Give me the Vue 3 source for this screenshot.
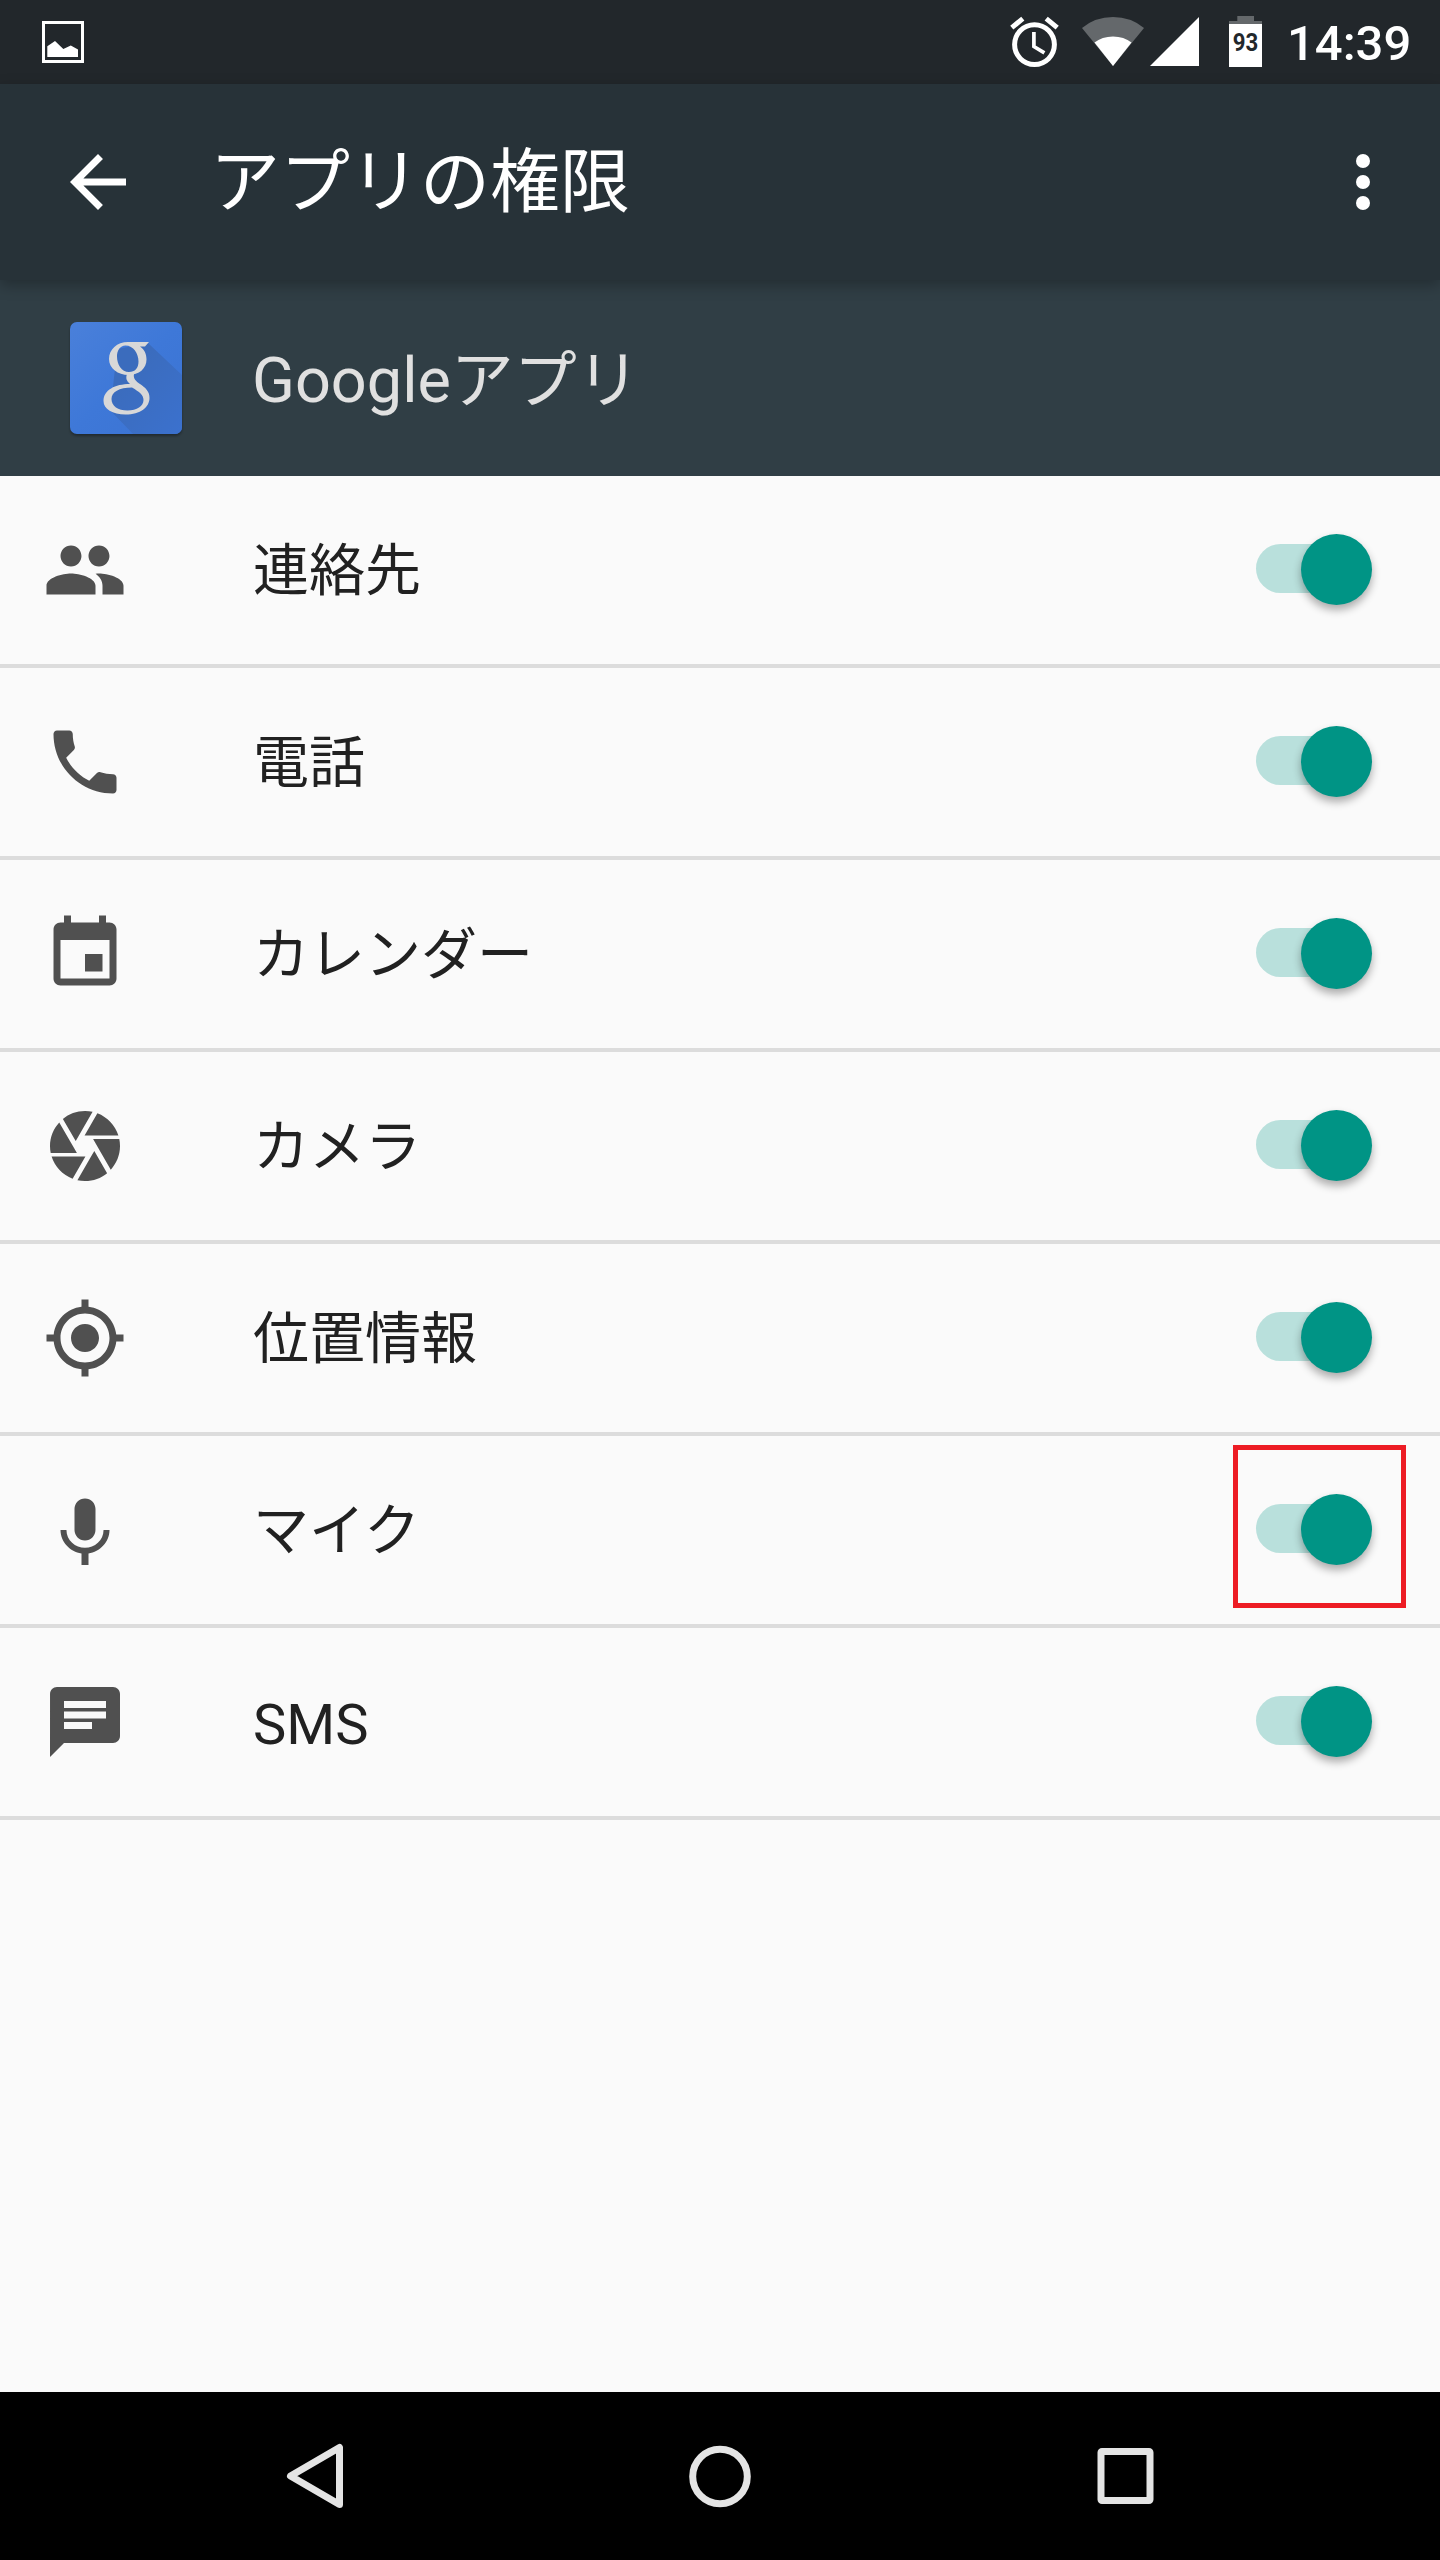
<script setup>
const permissions = [
  { name: '連絡先', icon: 'people' },
  { name: '電話', icon: 'phone' },
  { name: 'カレンダー', icon: 'calendar' },
  { name: 'カメラ', icon: 'camera' },
  { name: '位置情報', icon: 'location' },
  { name: 'マイク', icon: 'mic', highlighted: true },
  { name: 'SMS', icon: 'sms', latin: true },
]

const icons = {
  people: 'M16 11c1.66 0 2.99-1.34 2.99-3S17.66 5 16 5c-1.66 0-3 1.34-3 3s1.34 3 3 3zm-8 0c1.66 0 2.99-1.34 2.99-3S9.66 5 8 5C6.34 5 5 6.34 5 8s1.34 3 3 3zm0 2c-2.33 0-7 1.17-7 3.5V19h14v-2.5c0-2.33-4.67-3.5-7-3.5zm8 0c-.29 0-.62.02-.97.05 1.16.84 1.97 1.97 1.97 3.45V19h6v-2.5c0-2.33-4.67-3.5-7-3.5z',
  phone: 'M20 15.5c-1.25 0-2.45-.2-3.57-.57-.35-.11-.74-.03-1.02.24l-2.2 2.2c-2.83-1.44-5.15-3.75-6.59-6.59l2.2-2.21c.28-.26.36-.65.25-1C8.7 6.45 8.5 5.25 8.5 4c0-.55-.45-1-1-1H4c-.55 0-1 .45-1 1 0 9.39 7.61 17 17 17 .55 0 1-.45 1-1v-3.5c0-.55-.45-1-1-1z',
  calendar: 'M17 12h-5v5h5v-5zM16 1v2H8V1H6v2H5c-1.11 0-1.99.9-1.99 2L3 19c0 1.1.89 2 2 2h14c1.1 0 2-.9 2-2V5c0-1.1-.9-2-2-2h-1V1h-2zm3 18H5V8h14v11z',
  camera: 'M9.4 10.5l4.77-8.26C13.47 2.09 12.75 2 12 2c-2.4 0-4.6.85-6.32 2.25l3.66 6.35.06-.1zM21.54 9c-.92-2.92-3.15-5.26-6-6.34L11.88 9h9.66zm.26 1h-7.49l.29.5 4.76 8.25C21 16.97 22 14.61 22 12c0-.69-.07-1.35-.2-2zM8.54 12l-3.9-6.75C3.01 7.03 2 9.39 2 12c0 .69.07 1.35.2 2h7.49l-1.15-2zm-6.08 3c.92 2.92 3.15 5.26 6 6.34L12.12 15H2.46zm11.27 0l-3.9 6.76c.7.15 1.42.24 2.17.24 2.4 0 4.6-.85 6.32-2.25l-3.66-6.35-.93 1.6z',
  location: 'M12 8c-2.21 0-4 1.79-4 4s1.79 4 4 4 4-1.79 4-4-1.79-4-4-4zm8.94 3c-.46-4.17-3.77-7.48-7.94-7.94V1h-2v2.06C6.83 3.52 3.52 6.83 3.06 11H1v2h2.06c.46 4.17 3.77 7.48 7.94 7.94V23h2v-2.06c4.17-.46 7.48-3.77 7.94-7.94H23v-2h-2.06zM12 19c-3.87 0-7-3.13-7-7s3.13-7 7-7 7 3.13 7 7-3.13 7-7 7z',
  mic: 'M12 15c1.66 0 2.99-1.34 2.99-3L15 6c0-1.66-1.34-3-3-3S9 4.34 9 6v6c0 1.66 1.34 3 3 3zm5.3-3c0 3-2.54 5.1-5.3 5.1S6.700 15 6.700 12H5c0 3.41 2.720 6.230 6 6.720V22h2v-3.280c3.280-.48 6-3.300 6-6.720h-1.700z',
  sms: 'M20 2H4c-1.1 0-1.99.9-1.99 2L2 22l4-4h14c1.1 0 2-.9 2-2V4c0-1.1-.9-2-2-2zM6 9h12v2H6V9zm8 5H6v-2h8v2zm4-6H6V6h12v2z',
}
</script>

<template>
  <div class="screen">
    <div class="status-bar">
      <svg class="picture" width="44" height="44" viewBox="0 0 44 44">
        <rect x="2.500" y="2.500" width="39" height="39" fill="none" stroke="#fff" stroke-width="3" />
        <path d="M6.300 26.200l7.700-5.200 8.300 8 7.500-3.500 7.200 4v7.500H6.300z" fill="#fff" />
      </svg>
      <svg class="status-icons" width="256" height="84" viewBox="1008 0 256 84">
        <g fill="none" stroke="#fff">
          <circle cx="1034.500" cy="44.600" r="19.900" stroke-width="5" />
          <path d="M1033.900 32v14.500l10.500 6.300" stroke-width="3.700" />
          <path d="M1011.800 27.600l11-9M1057.200 27.600l-11-9" stroke-width="5" />
        </g>
        <path d="M1082 28Q1095 17 1113 17T1144 28L1113 66z" fill="#64686b" />
        <path d="M1094.500 42.500Q1102 36.500 1113 36.500T1131.500 42.500L1113 66z" fill="#fff" />
        <path d="M1199 17v49h-49z" fill="#fff" />
        <path d="M1237.300 16h16.700v5h8v4h-33v-4h8.300z" fill="#64686b" />
        <path d="M1229 24h33v43h-33z" fill="#fff" />
        <text x="1245.500" y="51" text-anchor="middle" textLength="25.500" lengthAdjust="spacingAndGlyphs" class="battery-level">93</text>
      </svg>
      <span class="clock">14:39</span>
    </div>

    <header class="toolbar">
      <svg class="back" width="84" height="84" viewBox="0 0 24 24">
        <path fill="#fff" d="M20 11H7.830l5.590-5.590L12 4l-8 8 8 8 1.410-1.410L7.830 13H20v-2z" />
      </svg>
      <h1>アプリの権限</h1>
      <svg class="more" width="84" height="84" viewBox="0 0 24 24" fill="#fff">
        <circle cx="12" cy="6" r="2" />
        <circle cx="12" cy="12" r="2" />
        <circle cx="12" cy="18" r="2" />
      </svg>
    </header>

    <section class="app-header">
      <svg class="app-icon" width="112" height="112" viewBox="0 0 112 112">
        <defs>
          <linearGradient id="tile" x1="0" y1="0" x2="1" y2="1">
            <stop offset="0" stop-color="#4a80da" />
            <stop offset=".5" stop-color="#3e78d8" />
            <stop offset="1" stop-color="#3b73d3" />
          </linearGradient>
          <linearGradient id="shade" x1="0.300" y1="0.300" x2="1" y2="1">
            <stop offset="0" stop-color="#3b6cbd" />
            <stop offset="1" stop-color="#3b71ce" />
          </linearGradient>
        </defs>
        <rect width="112" height="112" rx="7" fill="url(#tile)" />
        <path d="M78 21l34 32v52a7 7 0 0 1-7 7H63L39 87l4-22 4-38z" fill="url(#shade)" />
        <g fill="#d8d8d8" fill-rule="evenodd">
          <path d="M58 20H79l-4 4.500h-5c4.500 3 6.500 7.500 6.500 13 0 9-7.500 15.500-18 15.500S39 46.500 39 37 47 20 58 20zM55.500 23.500c-5.500 0-8.500 5-8.500 11 0 8 4.500 15.500 12 15.500 6 0 9.500-4 9.500-10.500 0-8-5-16-13-16z" />
          <path d="M57 52h7c-1 5 2 7 6 10 5 3.500 9.500 7 9.500 14 0 9-9 16.500-24 16.500-13 0-22-5.500-22-13.500C33.500 68 45 62 60 62c-3.500-3-4.500-6-3-10zM62 65.500c-13 0-20.500 4.500-20.500 11.500 0 7 6.500 11.500 16 11.500S73.500 84 73.500 78c0-5-4-8-11.500-12.500z" />
        </g>
      </svg>
      <h2>Googleアプリ</h2>
    </section>

    <ul class="permissions">
      <li v-for="p in permissions" :key="p.icon">
        <svg class="row-icon" width="84" height="84" viewBox="0 0 24 24">
          <path :d="icons[p.icon]" />
        </svg>
        <span class="label" :class="{ latin: p.latin }">{{ p.name }}</span>
        <span class="toggle" :class="{ highlighted: p.highlighted }">
          <i class="track"></i>
          <i class="thumb"></i>
        </span>
      </li>
    </ul>

    <nav class="nav-bar">
      <svg width="72" height="72" viewBox="0 0 72 72">
        <path d="M60.500 7.500v57L11.500 36z" />
      </svg>
      <svg width="72" height="72" viewBox="0 0 72 72">
        <circle cx="36" cy="36.500" r="27.300" />
      </svg>
      <svg width="72" height="72" viewBox="0 0 72 72">
        <rect x="12" y="11.500" width="49" height="49" rx="1" />
      </svg>
    </nav>
  </div>
</template>

<style>
body {
  margin: 0;
}
</style>

<style scoped>
.screen {
  width: 1440px;
  height: 2560px;
  display: flex;
  flex-direction: column;
  background: #fafafa;
  font-family: Roboto, "Noto Sans CJK JP", sans-serif;
  overflow: hidden;
}
.status-bar {
  flex: none;
  height: 84px;
  display: flex;
  align-items: center;
  background: #22272b;
}
.picture {
  margin-left: 41px;
}
.status-icons {
  margin-left: 923px;
}
.battery-level {
  font-size: 26.5px;
  font-weight: 700;
  fill: #22272b;
}
.clock {
  margin-left: 23px;
  font-size: 49px;
  font-weight: 500;
  line-height: 84px;
  padding-top: 4px;
  color: #fff;
}
.toolbar {
  flex: none;
  height: 196px;
  display: flex;
  align-items: center;
  background: #273238;
  box-shadow: 0 5px 14px rgba(0, 0, 0, 0.28);
  z-index: 1;
}
.back {
  margin-left: 56px;
}
h1 {
  flex: 1;
  margin: 0 0 0 70px;
  padding-top: 1px;
  font-size: 70px;
  font-weight: 400;
  line-height: 100px;
  color: #fff;
}
.more {
  margin-right: 35px;
}
.app-header {
  flex: none;
  height: 196px;
  box-sizing: border-box;
  padding-left: 70px;
  display: flex;
  align-items: center;
  background: #303e45;
}
.app-icon {
  filter: drop-shadow(0 2px 1px rgba(0, 0, 0, 0.3));
}
h2 {
  margin: 0 0 0 70px;
  padding-top: 6px;
  font-size: 63px;
  font-weight: 400;
  line-height: 90px;
  color: #e0e0e0;
}
.permissions {
  flex: 1;
  margin: 0;
  padding: 0;
  list-style: none;
}
.permissions li {
  height: 188px;
  display: flex;
  align-items: center;
  border-bottom: 4px solid #dcdcdc;
}
.row-icon {
  margin-left: 43px;
  fill: #505050;
}
.label {
  flex: 1;
  margin-left: 126px;
  padding-top: 2px;
  font-size: 56px;
  line-height: 84px;
  color: #212121;
}
.label.latin {
  padding-top: 6px;
}
.toggle {
  width: 163px;
  height: 153px;
  margin: 0 34px 7px 0;
  display: flex;
  align-items: flex-start;
  border: 5px solid transparent;
}
.toggle.highlighted {
  border-color: #ed1c24;
}
.track {
  width: 100px;
  height: 49px;
  margin: 54px 0 0 18px;
  border-radius: 25px;
  background: #b9e0dc;
}
.thumb {
  width: 71px;
  height: 71px;
  margin: 44px 0 0 -55px;
  border-radius: 50%;
  background: #009485;
  box-shadow: 0 5px 8px rgba(0, 0, 0, 0.32);
}
.nav-bar {
  flex: none;
  height: 168px;
  display: flex;
  align-items: center;
  justify-content: center;
  gap: 333px;
  background: #000;
}
.nav-bar svg {
  fill: none;
  stroke: #e4e4e4;
  stroke-width: 7;
  stroke-linejoin: round;
}
</style>
